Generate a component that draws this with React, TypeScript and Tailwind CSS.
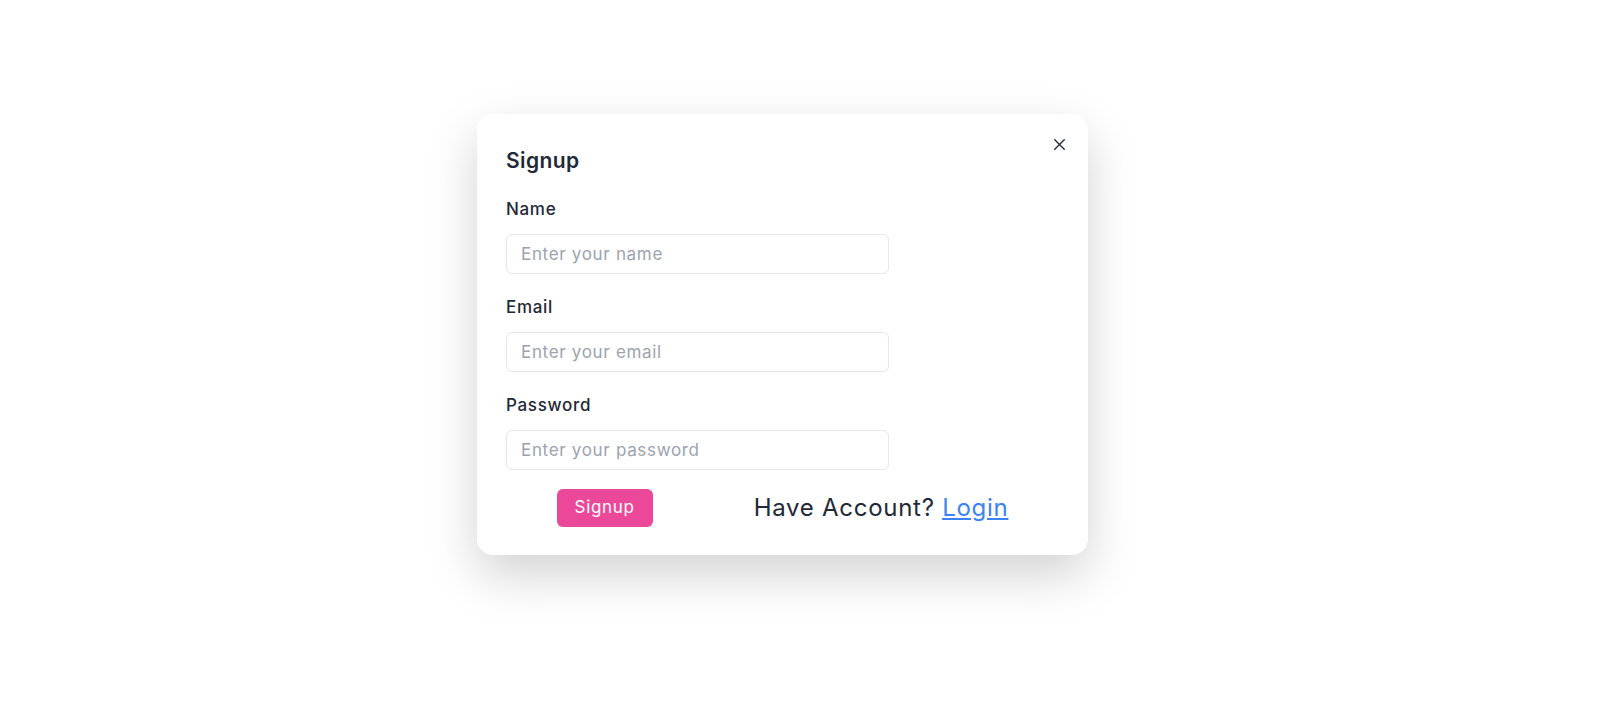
import React from 'react';
import { X } from 'lucide-react';

const fields = [
  { label: 'Name', type: 'text', placeholder: 'Enter your name' },
  { label: 'Email', type: 'email', placeholder: 'Enter your email' },
  { label: 'Password', type: 'password', placeholder: 'Enter your password' },
];

export default function App() {
  return (
    <div
      className="min-h-screen bg-white pt-[114px] pl-[477px]"
      style={{ fontFamily: 'Inter, "Noto Sans", sans-serif' }}
    >
      {/* Modal */}
      <div className="relative w-[611px] rounded-2xl bg-white px-[29px] pt-[33px] pb-[28px] shadow-[0_20px_50px_rgba(0,0,0,0.18)]">
        <button className="absolute right-[19px] top-[21px] text-[#1f2937]">
          <X className="h-[19px] w-[19px]" strokeWidth={1.75} />
        </button>

        <h2 className="text-[21px] font-semibold leading-7 tracking-[0.02em] text-[#1f2937]">
          Signup
        </h2>

        <form className="mt-[22px]">
          {fields.map((f, i) => (
            <div key={f.label} className={i > 0 ? 'mt-[21px]' : ''}>
              <label className="block text-[17px] font-medium leading-6 tracking-[0.04em] text-[#1f2937]">
                {f.label}
              </label>
              <input
                type={f.type}
                placeholder={f.placeholder}
                className="mt-[13px] block h-[40px] w-[383px] rounded-md border border-[#e5e7eb] px-[14px] text-[17px] tracking-[0.04em] text-[#1f2937] outline-none placeholder:text-[#9ca3af]"
              />
            </div>
          ))}

          <div className="mt-[19px] flex items-center justify-around">
            <button
              type="button"
              className="h-[38px] rounded-md bg-[#ec4899] px-[18px] text-[17px] tracking-[0.04em] text-white"
            >
              Signup
            </button>
            <p className="text-[24px] leading-[38px] tracking-[0.03em] text-[#1f2937]">
              Have Account?{' '}
              <a href="#" className="text-[#3b82f6] underline">
                Login
              </a>
            </p>
          </div>
        </form>
      </div>
    </div>
  );
}
